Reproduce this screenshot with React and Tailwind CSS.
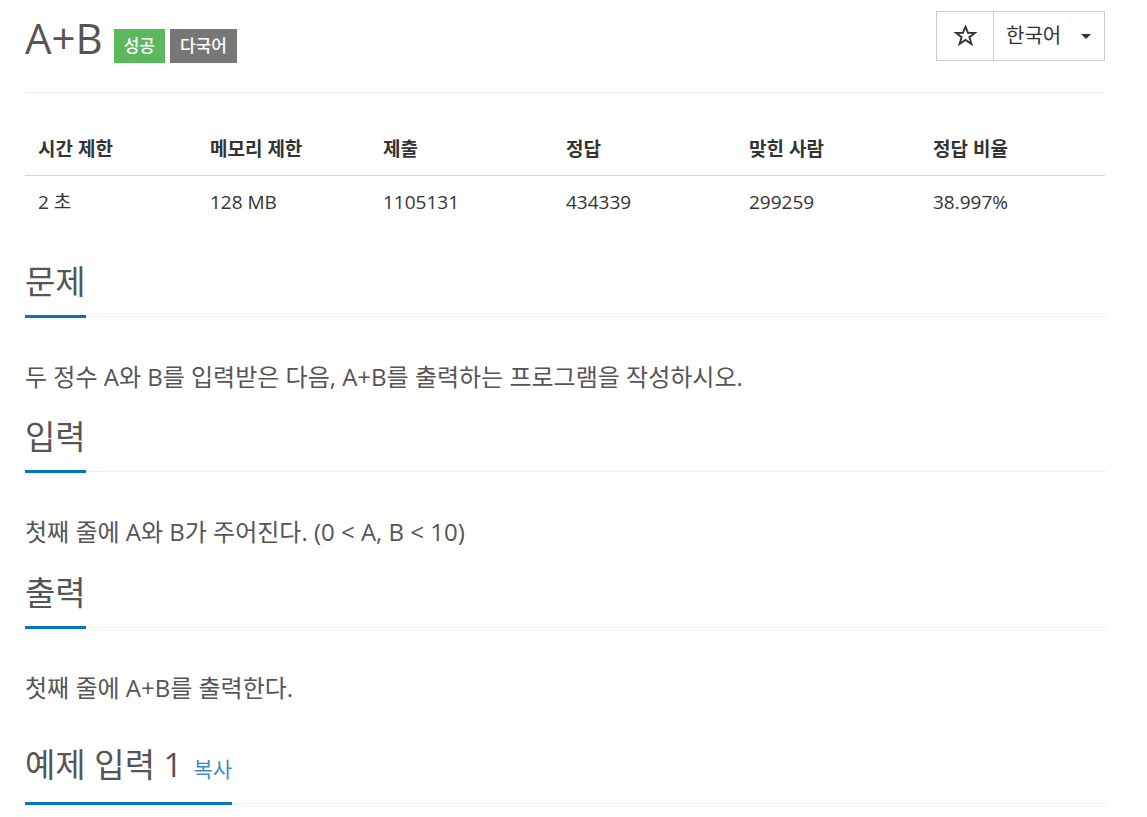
export default function App() {
  const cols = "grid grid-cols-[172px_173px_183px_183px_184px_1fr]";
  const Head = ({ children, extra, className = "" }) => (
    <div className={"flex items-end border-b border-dotted border-[#d9dee6] " + className}>
      <h2 className="text-[33px] leading-[40px] text-[#555] font-normal border-b-[3px] border-[#0076c0] pb-[13px] -mb-[2px] whitespace-nowrap flex items-baseline">
        <span>{children}</span>
        {extra}
      </h2>
    </div>
  );
  const Star = () => (
    <svg width="23" height="21" viewBox="0 0 24 22" fill="none" stroke="#333" strokeWidth="2" strokeLinejoin="miter">
      <path d="M12 1.8 L14.6 8.3 L21.8 8.4 L16.1 12.8 L18.2 19.9 L12 15.7 L5.8 19.9 L7.9 12.8 L2.2 8.4 L9.4 8.3 Z" />
    </svg>
  );
  return (
    <div className="min-h-[817px] bg-white px-[25px] font-['Open_Sans','Noto_Sans_CJK_KR',sans-serif] text-[#333] w-[1130px]">
      <div className="flex justify-between items-start border-b border-[#eee] h-[93px]">
        <div className="flex items-start mt-[14px]">
          <h1 className="text-[42px] leading-[48px] text-[#555] font-normal">A+B</h1>
          <span className="ml-[11px] mt-[15px] h-[34px] px-[10px] flex items-center bg-[#5cb85c] text-white text-[17px] font-medium">성공</span>
          <span className="ml-[5px] mt-[15px] h-[34px] px-[10px] flex items-center bg-[#777] text-white text-[17px] font-medium">다국어</span>
        </div>
        <div className="flex mt-[11px] h-[50px] border border-[#ccc]">
          <div className="w-[57px] flex items-center justify-center border-r border-[#ccc] pb-[1px]">
            <Star />
          </div>
          <div className="w-[110px] flex items-center pl-[12px] text-[20px] text-[#333]">
            한국어
            <span className="ml-[20px] mt-[1px] w-0 h-0 border-l-[5px] border-r-[5px] border-t-[5px] border-l-transparent border-r-transparent border-t-[#333]"></span>
          </div>
        </div>
      </div>

      <div className="mt-[20px]">
        <div className={cols + " border-b border-[#d6d6d6] font-bold text-[19px]"}>
          {["시간 제한", "메모리 제한", "제출", "정답", "맞힌 사람", "정답 비율"].map((t) => (
            <div key={t} className="pl-[13px] pt-[24px] pb-[14px] leading-[24px]">{t}</div>
          ))}
        </div>
        <div className={cols + " text-[19px]"}>
          {["2 초", "128 MB", "1105131", "434339", "299259", "38.997%"].map((t) => (
            <div key={t} className="pl-[13px] pt-[14px] pb-[13px] leading-[24px]">{t}</div>
          ))}
        </div>
      </div>

      <Head className="mt-[35px]">문제</Head>
      <p className="mt-[42px] text-[24px] leading-[36px] text-[#555]">
        두 정수 A와 B를 입력받은 다음, A+B를 출력하는 프로그램을 작성하시오.
      </p>

      <Head className="mt-[22px]">입력</Head>
      <p className="mt-[42px] text-[24px] leading-[36px] text-[#555]">
        첫째 줄에 A와 B가 주어진다. (0 &lt; A, B &lt; 10)
      </p>

      <Head className="mt-[23px]">출력</Head>
      <p className="mt-[42px] text-[24px] leading-[36px] text-[#555]">
        첫째 줄에 A+B를 출력한다.
      </p>

      <Head
        className="mt-[39px]"
        extra={<span className="ml-[11px] text-[21px] text-[#428bca]">복사</span>}
      >
        예제 입력 1
      </Head>
    </div>
  );
}
